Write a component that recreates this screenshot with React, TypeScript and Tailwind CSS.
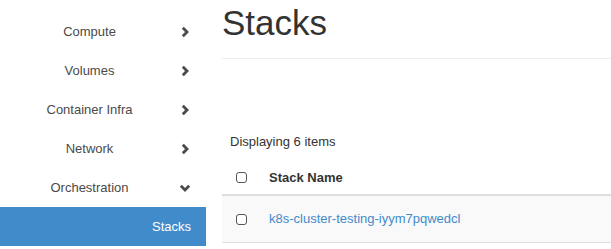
import React from "react";

const navItems = [
  { label: "Compute", open: false },
  { label: "Volumes", open: false },
  { label: "Container Infra", open: false },
  { label: "Network", open: false },
  { label: "Orchestration", open: true },
];

function Chevron({ open }: { open: boolean }) {
  return (
    <svg width="12" height="12" viewBox="0 0 12 12" className="shrink-0">
      {open ? (
        <polyline points="1.8,3.8 6,8 10.2,3.8" fill="none" stroke="#4a4a4a" strokeWidth="2.8" />
      ) : (
        <polyline points="3.8,1.8 8,6 3.8,10.2" fill="none" stroke="#4a4a4a" strokeWidth="2.8" />
      )}
    </svg>
  );
}

function Box() {
  return <div className="w-[11px] h-[11px] border border-[#555] rounded-[3px] bg-white"></div>;
}

function App() {
  return (
    <div
      className="flex w-[611px] h-[249px] overflow-hidden bg-white text-[13px] text-[#333]"
      style={{ fontFamily: '"Liberation Sans", Arial, sans-serif' }}>
      <div className="w-[206px] shrink-0 pt-[12px]">
        {navItems.map((item) => (
          <div key={item.label} className="flex items-center h-[39px] text-[#4a4a4a]">
            <span className="w-[179px] text-center">{item.label}</span>
            <Chevron open={item.open} />
          </div>
        ))}
        <div className="flex items-center justify-end h-[39px] pr-[15px] bg-[#428bca] text-white">
          Stacks
        </div>
      </div>

      <div className="flex-1 pl-[16px]">
        <div className="h-[59px] border-b border-[#eee]">
          <h1 className="pt-[4px] text-[35px] leading-[38px] text-[#333]">Stacks</h1>
        </div>
        <div className="mt-[74px] pl-[8px] leading-[18px]">Displaying 6 items</div>
        <div className="mt-[10px]">
          <div className="flex items-center h-[35px] border-b-2 border-[#ddd]">
            <div className="w-[47px] pl-[14px]">
              <Box />
            </div>
            <span className="font-bold">Stack Name</span>
          </div>
          <div className="flex items-center h-[47px] bg-[#f9f9f9] border-b border-[#ddd]">
            <div className="w-[47px] pl-[14px]">
              <Box />
            </div>
            <span className="text-[#428bca]">k8s-cluster-testing-iyym7pqwedcl</span>
          </div>
        </div>
      </div>
    </div>
  );
}

export default App;
